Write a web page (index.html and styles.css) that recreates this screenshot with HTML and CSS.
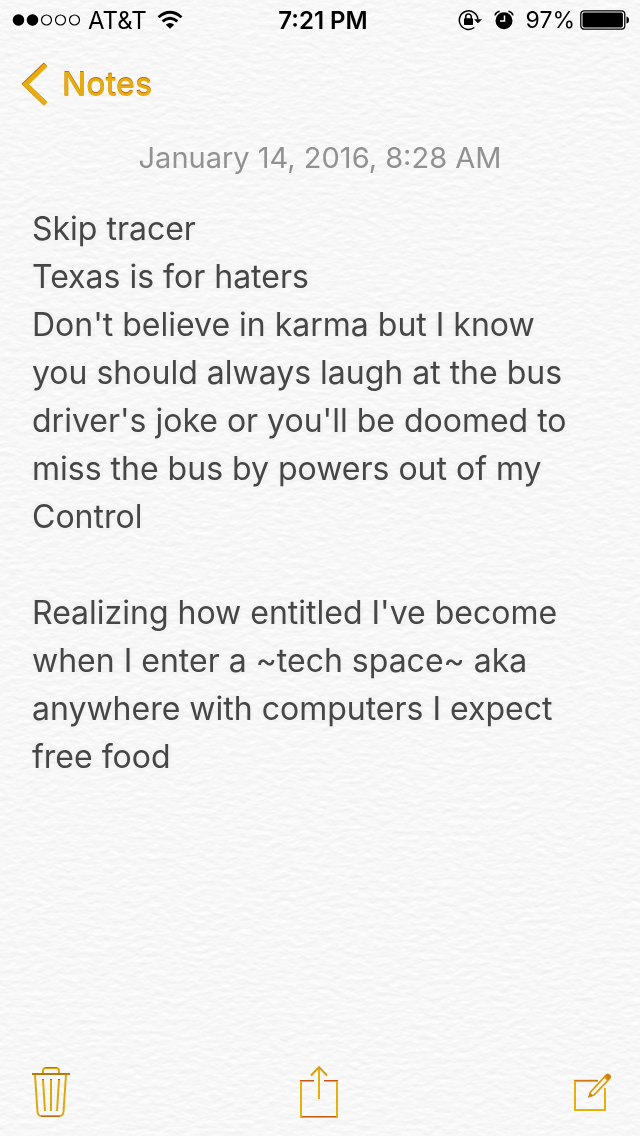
FILE: index.html
```html
<!DOCTYPE html>
<html lang="en">
<head>
<meta charset="utf-8">
<meta name="viewport" content="width=device-width, initial-scale=1">
<title>Notes</title>
<link rel="stylesheet" href="styles.css">
</head>
<body>
<svg class="paper" aria-hidden="true">
  <filter id="grain" x="0" y="0" width="100%" height="100%" color-interpolation-filters="sRGB">
    <feTurbulence type="fractalNoise" baseFrequency="0.1 0.18" numOctaves="4" seed="8" result="noise"/>
    <feDiffuseLighting in="noise" lighting-color="#ffffff" surfaceScale="0.15" diffuseConstant="1.12">
      <feDistantLight azimuth="270" elevation="60"/>
    </feDiffuseLighting>
  </filter>
  <rect width="100%" height="100%" filter="url(#grain)"/>
</svg>
<div class="screen">
  <header class="status">
    <div class="status-side">
      <svg class="signal" width="70" height="14" viewBox="0 0 70 14" role="img" aria-label="Signal: 2 of 5">
        <g stroke="#000" stroke-width="1.2"><circle cx="6.5" cy="7" r="5.2"/><circle cx="20.5" cy="7" r="5.2"/>
        <g fill="none"><circle cx="34.5" cy="7" r="5"/><circle cx="48.5" cy="7" r="5"/><circle cx="62.5" cy="7" r="5"/></g></g>
      </svg>
      <span class="carrier">AT&amp;T</span>
      <svg width="26" height="20" viewBox="0 0 26 20" role="img" aria-label="Wi-Fi">
        <g fill="none" stroke="#000" stroke-width="2.8"><path d="M1.5 7.2Q13-2.8 24.5 7.2"/><path d="M5.6 11.4Q13 5 20.4 11.4"/></g>
        <path d="M8.8 14.7Q13 11.2 17.2 14.7L13 18.8Z"/>
      </svg>
    </div>
    <time class="clock">7:21 PM</time>
    <div class="status-side status-right">
      <svg width="24" height="22" viewBox="0 0 24 22" role="img" aria-label="Rotation lock">
        <path d="M16.3 18.5A9.3 9.3 0 1 1 19.9 10.5" fill="none" stroke="#000" stroke-width="1.5"/>
        <path d="M16 10.2H24L20 14.3Z"/><rect x="6" y="9.2" width="9" height="6.8" rx=".8"/>
        <path d="M7.7 10V7.8a2.8 2.8 0 0 1 5.6 0V10" fill="none" stroke="#000" stroke-width="1.5"/>
      </svg>
      <svg class="alarm" width="20" height="20" viewBox="0 0 20 20" role="img" aria-label="Alarm">
        <circle cx="10" cy="10.7" r="8.5"/>
        <path d="M1 5.4Q1.8 2 5.6 1.2M19 5.4Q18.2 2 14.4 1.2" fill="none" stroke="#000" stroke-width="1.6"/>
        <path d="M10.5 5.5V11H6" fill="none" stroke="#fff" stroke-width="1.5"/>
      </svg>
      <span class="percent">97%</span>
      <svg width="50" height="20" viewBox="0 0 50 20" role="img" aria-label="Battery">
        <rect x=".8" y=".8" width="44" height="18.4" rx="3.4" fill="none" stroke="#000" stroke-width="1.3"/>
        <rect x="2.5" y="2.5" width="40.4" height="15" rx="1.8"/><path d="M46.5 6.5Q49 7 49 10T46.5 13.5Z"/>
      </svg>
    </div>
  </header>
  <nav class="nav">
    <a class="back" href="#notes">
      <svg width="28" height="44" viewBox="0 0 28 44" aria-hidden="true">
        <path d="M25.5 2.3L5 22L25.5 41.7" fill="none" stroke="#b96a18" stroke-width="5"/>
        <path d="M25.8 3.2L5.5 22.5L25.8 41.8" fill="none" stroke="#e7ad0e" stroke-width="4.6"/>
      </svg>
      <span>Notes</span>
    </a>
  </nav>
  <main class="note">
    <time class="date" datetime="2016-01-14T08:28">January 14, 2016, 8:28 AM</time>
    <p>Skip tracer<br>Texas is for haters<br>Don't believe in karma but I know<br>you should always laugh at the bus<br>driver's joke or you'll be doomed to<br>miss the bus by powers out of my<br>Control</p>
    <p>Realizing how entitled I've become<br>when I enter a ~tech space~ aka<br>anywhere with computers I expect<br>free food</p>
  </main>
  <footer class="toolbar">
    <button type="button" aria-label="Delete">
      <svg width="43" height="52" viewBox="-3 0 43 52" fill="none" stroke="#e0a70c" stroke-width="2">
        <path d="M4 9L6.5 46Q7 50 10.5 50H28.5Q32 50 32.5 46L35 9"/>
        <path d="M12 8V5Q12 2 15 2H25Q28 2 28 5V8M12 14L14 45M20 14V45M28 14L26 45"/>
        <path d="M1 8H39" stroke="#bd760b"/>
        <path d="M14 1.5H26M11 13.5H13M19 13.5H21M27 13.5H29M10 50.5H29" stroke="#bd6b12" stroke-width="1"/>
      </svg>
    </button>
    <button type="button" aria-label="Share">
      <svg width="42" height="54" viewBox="0 0 42 54" fill="none" stroke="#e7b10b" stroke-width="2">
        <path d="M15 16H2V52H38V16H25M20 2V34"/><path d="M12 10.5L20 2.2L28 10.5" stroke="#d99b18"/>
        <path d="M1 15.5H15M25 15.5H39M3 51.5H37" stroke="#c95812" stroke-width="1.2"/>
      </svg>
    </button>
    <button type="button" aria-label="New note">
      <svg width="40" height="40" viewBox="-1 0 40 40" fill="none" stroke="#e7b10b" stroke-width="2">
        <path d="M25 9H2V38H32V16"/><path d="M1 8.4H25" stroke="#d07a12" stroke-width="1.2"/>
        <path d="M17.5 20L31.5 5L35 8.3L21 23L16.5 24.5Z" stroke="#dc9b10" stroke-width="1.8"/>
        <path d="M19.2 21.3L32.8 7" stroke="#faf5e8" stroke-width="1.2"/>
        <path d="M31.2 3.8L33.2 2Q34.5 .8 36 2L37.8 3.6Q39 5 37.8 6.3L35.8 8.2ZM15 25.8L17 20.5L20.2 23.5Z" fill="#cc8512" stroke="none"/>
      </svg>
    </button>
  </footer>
</div>
</body>
</html>
```
FILE: styles.css
```css
* { box-sizing: border-box; }

body {
  margin: 0;
  background: #f7f7f7;
  color: #464646;
  font-family: Inter, "Liberation Sans", sans-serif;
}

.paper {
  position: fixed;
  inset: 0;
  width: 100%;
  height: 100%;
  z-index: -1;
}

.screen {
  display: flex;
  flex-direction: column;
  min-height: 100vh;
}

svg { display: block; flex: none; }

.status {
  display: grid;
  grid-template-columns: 1fr auto 1fr;
  align-items: center;
  height: 40px;
  padding: 0 10px 0 12px;
  color: #000;
  font-size: 24px;
}

.status-side { display: flex; align-items: center; }
.status-right { justify-content: flex-end; }
.carrier { margin: 0 10px 0 6px; }
.clock { padding-left: 4px; font-weight: 600; }
.alarm { margin: 0 12px; }
.percent { margin-right: 5px; font-size: 23px; }

.nav {
  display: flex;
  align-items: center;
  height: 88px;
  padding: 0 20px;
}

.back {
  display: flex;
  align-items: center;
  gap: 14px;
  color: #e7ad0e;
  font-size: 32px;
  font-weight: 500;
  text-decoration: none;
  text-shadow: 0 -1px 0 #b96a18;
}

.note {
  flex: 1;
  padding: 8px 32px;
  font-size: 32px;
  line-height: 48px;
}

.note p {
  margin: 0 0 48px;
  text-shadow: 0 0 4px #ffffff, 0 0 4px #d8d8d8;
}

.date {
  display: block;
  margin-bottom: 25px;
  color: #929292;
  font-size: 29px;
  line-height: 44px;
  text-align: center;
}

.toolbar {
  display: grid;
  grid-template-columns: 1fr auto 1fr;
  align-items: center;
  height: 88px;
  padding: 0 28px;
}

.toolbar button {
  justify-self: start;
  padding: 0;
  border: 0;
  background: none;
}

.toolbar button:last-child { justify-self: end; }
```
